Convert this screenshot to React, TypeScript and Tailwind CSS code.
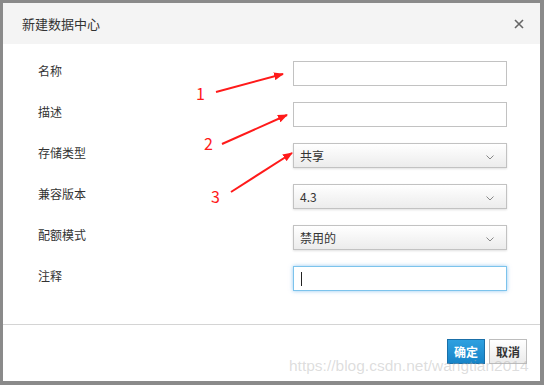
import React from "react";

const font = { fontFamily: '"Noto Sans CJK SC", "Noto Sans", sans-serif' };

function Chevron() {
  return (
    <svg width="8" height="5" viewBox="0 0 8 5" className="absolute right-[12px] top-[11px]">
      <path d="M0.5 0.5 L4 4 L7.5 0.5" fill="none" stroke="#888" strokeWidth="1" />
    </svg>
  );
}

function Field({ label, children }: { label: string; children: React.ReactNode }) {
  return (
    <div className="flex items-start h-[25px]">
      <div className="w-[290px] shrink-0 pl-[35px] mt-[2px] leading-4 text-[12px] text-[#333]">{label}</div>
      <div className="w-[214px] h-[25px]">{children}</div>
    </div>
  );
}

function TextBox() {
  return <div className="w-full h-full border border-[#c2c2c2] bg-white" />;
}

function SelectBox({ value }: { value: string }) {
  return (
    <div className="relative w-full h-full border border-[#c2c2c2] bg-gradient-to-b from-white to-[#ececec] shadow-[0_1px_2px_rgba(0,0,0,0.12)] flex items-center pl-[6px] text-[12px] text-[#333]">
      {value}
      <Chevron />
    </div>
  );
}

function Annotations() {
  return (
    <div className="absolute inset-0 pointer-events-none">
      <svg width="544" height="385" className="absolute left-0 top-0">
        <defs>
          <marker id="ah" markerWidth="10" markerHeight="8" refX="9" refY="4" orient="auto" markerUnits="userSpaceOnUse">
            <path d="M0 0 L10 4 L0 8 Z" fill="#ff1a1a" />
          </marker>
        </defs>
        <line x1="216" y1="92" x2="283" y2="74" stroke="#ff1a1a" strokeWidth="2" markerEnd="url(#ah)" />
        <line x1="222" y1="144" x2="287" y2="115" stroke="#ff1a1a" strokeWidth="2" markerEnd="url(#ah)" />
        <line x1="231" y1="192" x2="292" y2="153" stroke="#ff1a1a" strokeWidth="2" markerEnd="url(#ah)" />
      </svg>
      <div className="absolute left-[196px] top-[83px] text-[16px] leading-5 text-[#ff1a1a]" style={font}>1</div>
      <div className="absolute left-[204px] top-[133px] text-[16px] leading-5 text-[#ff1a1a]" style={font}>2</div>
      <div className="absolute left-[211px] top-[186px] text-[16px] leading-5 text-[#ff1a1a]" style={font}>3</div>
    </div>
  );
}

export default function App() {
  return (
    <div className="relative w-[544px] h-[385px] bg-[#8a8a8a] pl-[3px] pt-[3px] overflow-hidden" style={font}>
      <div className="w-[537px] h-[378px] bg-white flex flex-col">
        <div className="h-[41px] bg-[#f4f4f4] flex items-center justify-between pl-[19px] pr-[16px]">
          <span className="text-[13px] text-[#333]">新建数据中心</span>
          <svg width="10" height="10" viewBox="0 0 10 10">
            <path d="M1 1 L9 9 M9 1 L1 9" stroke="#666" strokeWidth="1.6" />
          </svg>
        </div>
        <div className="flex-1 flex flex-col gap-4 pt-[17px]">
          <Field label="名称"><TextBox /></Field>
          <Field label="描述"><TextBox /></Field>
          <Field label="存储类型"><SelectBox value="共享" /></Field>
          <Field label="兼容版本"><SelectBox value="4.3" /></Field>
          <Field label="配额模式"><SelectBox value="禁用的" /></Field>
          <Field label="注释">
            <div className="relative w-full h-full border border-[#7cc3ec] bg-white shadow-[0_0_4px_rgba(102,175,233,0.7)]">
              <div className="absolute left-[7px] top-[5px] w-px h-[14px] bg-[#222]" />
            </div>
          </Field>
        </div>
        <div className="h-[57px] border-t border-[#d4d4d4] flex justify-end gap-[4px] pt-[14px] pr-[13px]">
          <button className="w-[38px] h-[25px] border border-[#1a6fa8] bg-gradient-to-b from-[#2ea0e0] to-[#1684c8] text-white text-[12px] font-bold">确定</button>
          <button className="w-[38px] h-[25px] border border-[#bdbdbd] bg-gradient-to-b from-white to-[#ebebeb] text-[#333] text-[12px] font-bold">取消</button>
        </div>
      </div>
      <Annotations />
      <div
        className="absolute left-[289px] top-[356px] text-[15.5px] leading-5 text-[rgba(180,180,180,0.45)] whitespace-nowrap pointer-events-none"
        style={{ fontFamily: '"Liberation Sans", Arial, sans-serif' }}
      >
        https://blog.csdn.net/wangtian2014
      </div>
    </div>
  );
}
